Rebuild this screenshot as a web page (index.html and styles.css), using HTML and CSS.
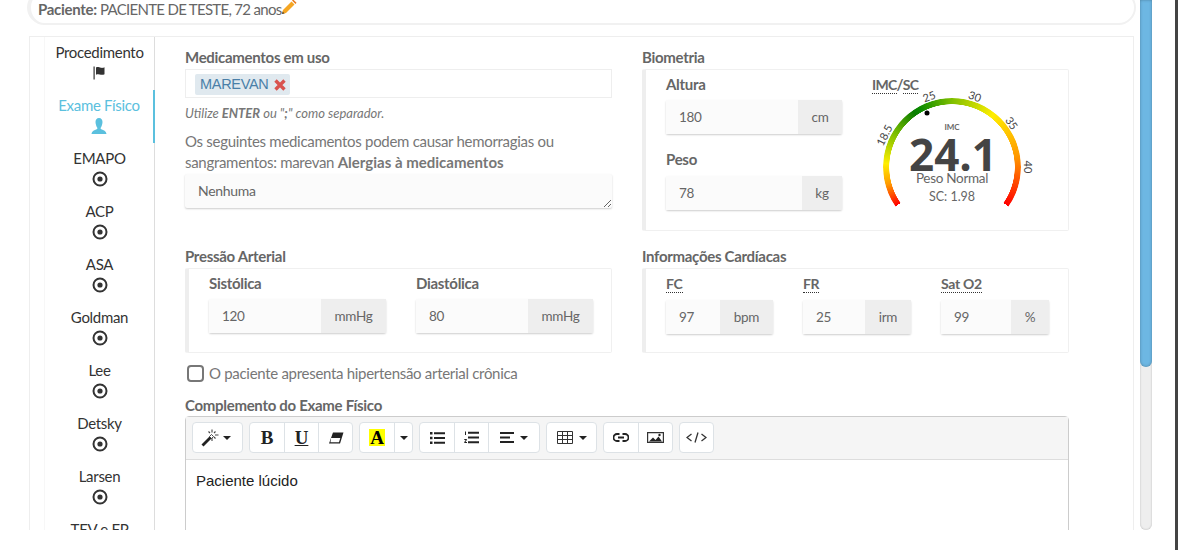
FILE: index.html
```html
<!DOCTYPE html>
<html lang="pt-br">
<head>
    <meta charset="UTF-8">
    <meta name="viewport" content="width=device-width, initial-scale=1.0">
    <title>Exame Físico</title>
    <link rel="stylesheet" href="styles.css">
</head>
<body>
    <div class="page">
        <div class="content">
            <div class="patient-bar">
                <b>Paciente:</b> PACIENTE DE TESTE, 72 anos<svg class="icon-pencil" width="16" height="16" viewBox="0 0 16 16"><path d="M1 15l1-4 8.500-8.500 3 3L5 14z" fill="#f5a623"/><path d="M11 1.500l1.200-1 3.300 3.300-1 1.200z" fill="#e8791c"/><path d="M1 15l.6-2.600 2 2z" fill="#5a4630"/></svg>
            </div>

            <div class="tabs">
                <ul class="nav">
                    <li>Procedimento
                        <svg class="nav-icon" width="16" height="16" viewBox="0 0 16 16"><path d="M1.500 1.500h1.200v13H1.500z" fill="#333"/><path d="M4 2.500c2-1 3 0 5 .3s2.500-.3 3.500-.6v7c-1 .5-2 .8-3.500.5s-3-1-5 0z" fill="#333"/></svg>
                    </li>
                    <li class="active">Exame Físico
                        <svg class="nav-icon" width="16" height="16" viewBox="0 0 16 16"><path d="M8 0c2.300 0 3.500 1.700 3.500 4S10.300 9 9.700 9.800c-.3.800 0 1.200 1 1.600 2 .7 4.300 1.300 4.800 4.600H.5c.5-3.300 2.800-3.900 4.800-4.600 1-.4 1.300-.8 1-1.600C5.700 9 4.500 6.300 4.500 4S5.700 0 8 0z" fill="currentColor"/></svg>
                    </li>
                    <li>EMAPO <svg class="nav-icon" width="16" height="16" viewBox="0 0 16 16"><circle cx="8" cy="8" r="6.500" fill="none" stroke="#333" stroke-width="2"/><circle cx="8" cy="8" r="2.600" fill="#333"/></svg></li>
                    <li>ACP <svg class="nav-icon" width="16" height="16" viewBox="0 0 16 16"><circle cx="8" cy="8" r="6.500" fill="none" stroke="#333" stroke-width="2"/><circle cx="8" cy="8" r="2.600" fill="#333"/></svg></li>
                    <li>ASA <svg class="nav-icon" width="16" height="16" viewBox="0 0 16 16"><circle cx="8" cy="8" r="6.500" fill="none" stroke="#333" stroke-width="2"/><circle cx="8" cy="8" r="2.600" fill="#333"/></svg></li>
                    <li>Goldman <svg class="nav-icon" width="16" height="16" viewBox="0 0 16 16"><circle cx="8" cy="8" r="6.500" fill="none" stroke="#333" stroke-width="2"/><circle cx="8" cy="8" r="2.600" fill="#333"/></svg></li>
                    <li>Lee <svg class="nav-icon" width="16" height="16" viewBox="0 0 16 16"><circle cx="8" cy="8" r="6.500" fill="none" stroke="#333" stroke-width="2"/><circle cx="8" cy="8" r="2.600" fill="#333"/></svg></li>
                    <li>Detsky <svg class="nav-icon" width="16" height="16" viewBox="0 0 16 16"><circle cx="8" cy="8" r="6.500" fill="none" stroke="#333" stroke-width="2"/><circle cx="8" cy="8" r="2.600" fill="#333"/></svg></li>
                    <li>Larsen <svg class="nav-icon" width="16" height="16" viewBox="0 0 16 16"><circle cx="8" cy="8" r="6.500" fill="none" stroke="#333" stroke-width="2"/><circle cx="8" cy="8" r="2.600" fill="#333"/></svg></li>
                    <li>TEV e FP</li>
                </ul>

                <div class="panel">
                    <div class="columns">
                        <div class="col">
                            <label class="title">Medicamentos em uso</label>
                            <div class="tag-box">
                                <span class="tag">MAREVAN <svg width="12" height="12" viewBox="0 0 12 12"><path d="M1.500 1.500l9 9M10.500 1.500l-9 9" stroke="#d9534f" stroke-width="3.400"/></svg></span>
                            </div>
                            <p class="hint">Utilize <b>ENTER</b> ou "<b>;</b>" como separador.</p>
                            <p class="warning">Os seguintes medicamentos podem causar hemorragias ou sangramentos: marevan <b>Alergias à medicamentos</b></p>
                            <textarea class="notes">Nenhuma</textarea>
                        </div>

                        <div class="col">
                            <label class="title">Biometria</label>
                            <div class="box box-bio">
                                <div class="bio-fields">
                                    <div class="field field-altura">
                                        <label>Altura</label>
                                        <div class="input-group"><input type="text" value="180"><span>cm</span></div>
                                    </div>
                                    <div class="field field-peso">
                                        <label>Peso</label>
                                        <div class="input-group"><input type="text" value="78"><span class="addon-kg">kg</span></div>
                                    </div>
                                </div>
                                <div class="imc">
                                    <label><abbr>IMC</abbr>/<abbr>SC</abbr></label>
                                    <div class="gauge">
                                        <div class="gauge-arc"></div>
                                        <svg class="gauge-text" width="168" height="120" viewBox="0 0 168 120">
                                            <text class="tick" x="12" y="38" transform="rotate(-63 12 38)">18.5</text>
                                            <text class="tick" x="57" y="-1" transform="rotate(-20 57 -1)">25</text>
                                            <text class="tick" x="103" y="-1" transform="rotate(20 103 -1)">30</text>
                                            <text class="tick" x="140" y="26" transform="rotate(55 140 26)">35</text>
                                            <text class="tick" x="156" y="70" transform="rotate(90 156 70)">40</text>
                                            <circle cx="55" cy="16" r="2.500" fill="#000"/>
                                            <text class="g-small" x="80" y="30">IMC</text>
                                            <text class="g-value" x="81" y="57">24.1</text>
                                            <text class="g-label" x="80" y="81">Peso Normal</text>
                                            <text class="g-sc" x="80" y="99">SC: 1.98</text>
                                        </svg>
                                    </div>
                                </div>
                            </div>
                        </div>

                        <div class="col">
                            <label class="title">Pressão Arterial</label>
                            <div class="box box-row box-pressure">
                                <div class="field">
                                    <label>Sistólica</label>
                                    <div class="input-group"><input type="text" value="120"><span>mmHg</span></div>
                                </div>
                                <div class="field">
                                    <label>Diastólica</label>
                                    <div class="input-group"><input type="text" value="80"><span>mmHg</span></div>
                                </div>
                            </div>
                        </div>

                        <div class="col">
                            <label class="title">Informações Cardíacas</label>
                            <div class="box box-row box-cardiac">
                                <div class="field fc">
                                    <label><abbr>FC</abbr></label>
                                    <div class="input-group"><input type="text" value="97"><span>bpm</span></div>
                                </div>
                                <div class="field fr">
                                    <label><abbr>FR</abbr></label>
                                    <div class="input-group"><input type="text" value="25"><span>irm</span></div>
                                </div>
                                <div class="field sat">
                                    <label><abbr>Sat O2</abbr></label>
                                    <div class="input-group"><input type="text" value="99"><span>%</span></div>
                                </div>
                            </div>
                        </div>
                    </div>

                    <label class="check-row"><input type="checkbox"> O paciente apresenta hipertensão arterial crônica</label>

                    <label class="title">Complemento do Exame Físico</label>
                    <div class="editor">
                        <div class="toolbar">
                            <div class="btn-group">
                                <button class="w49 tight"><svg width="18" height="18" viewBox="0 0 18 18"><path d="M.5 15.500l8-8 2 2-8 8z" fill="#222"/><path d="M8.500 7.500l2-2 2 2-2 2z" fill="#fff" stroke="#222" stroke-width=".8"/><path d="M11 .5v3M11 9v3M14 6h3.500M14.500 2.500l-1.500 1.500M14.500 9.500l-1.500-1.500M7.500 2.500L9 4" stroke="#444" stroke-width="1.100"/></svg><i class="caret"></i></button>
                            </div>
                            <div class="btn-group">
                                <button class="w34 serif"><b>B</b></button>
                                <button class="w34 serif"><b class="under">U</b></button>
                                <button class="w34"><svg width="16" height="12" viewBox="0 0 16 12"><path d="M5 .5h10.500L12 11.500H1z" fill="#222"/><path d="M3 6h9.300l-1.300 4.300H2.500z" fill="#fff"/></svg></button>
                            </div>
                            <div class="btn-group">
                                <button class="w34 serif"><b class="hilite">A</b></button>
                                <button class="w18"><i class="caret"></i></button>
                            </div>
                            <div class="btn-group">
                                <button class="w34"><svg width="15" height="12" viewBox="0 0 15 12"><path d="M0 0h2.500v2.500H0zM4 .3h11v2H4zM0 4.700h2.500v2.500H0zM4 5h11v2H4zM0 9.500h2.500V12H0zM4 9.700h11v2H4z" fill="#222"/></svg></button>
                                <button class="w34"><svg width="15" height="13" viewBox="0 0 15 13"><path d="M4 .8h11v2H4zM4 5.500h11v2H4zM4 10.200h11v2H4z" fill="#222"/><path d="M1 .5h1v3.500H1zM.3 8h2.500v1L1.500 11h1.500v1H.3v-1l1.400-2H.3z" fill="#222"/></svg></button>
                                <button class="w51"><svg width="14" height="11" viewBox="0 0 14 11"><path d="M0 0h14v2H0zM0 4.500h10v2H0zM0 9h14v2H0z" fill="#222"/></svg><i class="caret"></i></button>
                            </div>
                            <div class="btn-group">
                                <button class="w49"><svg width="16" height="13" viewBox="0 0 16 13"><path d="M.5.500h15v12H.5zM.5 4.500h15M.5 8.500h15M5.500.500v12M10.500.500v12" fill="none" stroke="#333" stroke-width="1"/></svg><i class="caret"></i></button>
                            </div>
                            <div class="btn-group">
                                <button class="w34"><svg width="16" height="9" viewBox="0 0 16 9"><path d="M6.500 1H4a3.500 3.500 0 000 7h2.500M9.500 1H12a3.500 3.500 0 010 7H9.500M5 4.500h6" fill="none" stroke="#222" stroke-width="1.800"/></svg></button>
                                <button class="w34"><svg width="17" height="11" viewBox="0 0 17 11"><path d="M.6.600h15.800v9.800H.6z" fill="none" stroke="#333" stroke-width="1.200"/><path d="M2 9.500l4-4 2.500 2.500 3-3.500 3.500 5z" fill="#222"/><circle cx="12.500" cy="3" r="1.200" fill="#222"/></svg></button>
                            </div>
                            <div class="btn-group">
                                <button class="w33"><svg width="21" height="11" viewBox="0 0 21 11"><path d="M5.500 2L1 5.500 5.500 9M15.500 2L20 5.500 15.500 9M12 .5L9 10.500" fill="none" stroke="#333" stroke-width="1.300"/></svg></button>
                            </div>
                        </div>
                        <div class="editor-body">Paciente lúcido</div>
                    </div>
                </div>
            </div>
        </div>

        <div class="scrollbar"><div class="thumb"></div></div>
    </div>
    <div class="edge"></div>
</body>
</html>
```

FILE: styles.css
```css
body {
    margin: 0;
    display: flex;
    height: 550px;
    overflow: hidden;
    background-color: #fff;
    font-family: Lato, "Open Sans", sans-serif;
    font-size: 15px;
    line-height: 21px;
    letter-spacing: -0.3px;
    color: #777;
}

.page {
    display: flex;
    width: 1175px;
    height: 530px;
    overflow: hidden;
}

.edge {
    width: 3px;
    height: 550px;
    background-color: #444;
}

.content {
    width: 1109px;
    margin-left: 27px;
}

.patient-bar {
    display: flex;
    align-items: center;
    height: 35px;
    margin-top: -10px;
    padding: 3px 7px 0;
    box-sizing: border-box;
    border: 2px solid #f1f1f1;
    border-left-width: 4px;
    border-radius: 20px;
    color: #666;
    white-space: pre;
    letter-spacing: -0.7px;
}

.patient-bar b {
    letter-spacing: -0.3px;
}

.icon-pencil {
    margin-top: -5px;
}

.tabs {
    display: flex;
    width: 1105px;
    height: 600px;
    margin: 11px 0 0 2px;
    box-sizing: border-box;
    border: 1px solid #eee;
}

.nav {
    width: 109px;
    margin: 0 0 0 14px;
    padding: 0;
    list-style: none;
    border-left: 1px solid #f7f7f7;
    border-right: 1px solid #ddd;
    color: #333;
    text-align: center;
    flex-shrink: 0;
}

.nav li {
    height: 53px;
    box-sizing: border-box;
    padding-top: 5px;
}

.nav li.active {
    color: #5bc0de;
    border-right: 2px solid #5bc0de;
    margin-right: -1px;
}

.nav-icon {
    display: block;
    margin: 2px auto 0;
}

.panel {
    padding: 11px 0 0 30px;
    width: 884px;
}

.columns {
    display: grid;
    grid-template-columns: 427px 427px;
    column-gap: 30px;
    row-gap: 16px;
}

.title {
    display: block;
    padding-bottom: 2px;
    font-weight: bold;
    line-height: 19px;
    color: #666;
}

.tag-box {
    height: 29px;
    box-sizing: border-box;
    border: 1px solid #eee;
    padding: 3px 9px;
}

.tag {
    display: inline-flex;
    align-items: center;
    gap: 5px;
    height: 21px;
    padding: 0 4px 0 5px;
    border-radius: 2px;
    background-color: #e0e9ef;
    color: #4a7fa8;
    font-family: "Liberation Sans", sans-serif;
    font-size: 14.5px;
}

.hint {
    margin: 6px 0 0;
    font-size: 13px;
    line-height: 18px;
    font-style: italic;
    letter-spacing: 0;
}

.warning {
    margin: 9px 0 1px;
}

.warning b {
    letter-spacing: 0;
}

.notes {
    display: block;
    width: 100%;
    height: 34px;
    box-sizing: border-box;
    padding: 7px 13px;
    border: 0;
    border-radius: 2px;
    background-color: #fbfbfb;
    box-shadow: 0 1px 2px rgba(0, 0, 0, 0.2);
    font-family: inherit;
    font-size: 14px;
    line-height: 20px;
    letter-spacing: -0.3px;
    color: #666;
}

.box {
    box-sizing: border-box;
    border: 1px solid #f0f0f0;
    border-left: 4px solid #eee;
    border-radius: 2px;
}

.box-bio {
    display: flex;
    gap: 30px;
    height: 162px;
    padding: 4px 0 0 20px;
}

.bio-fields {
    width: 176px;
}

.box-row {
    display: flex;
    height: 85px;
    padding: 4px 0 0 20px;
}

.box-pressure .field {
    width: 177px;
    margin-right: 30px;
}

.field label {
    display: block;
    margin-bottom: 5px;
    font-weight: bold;
    color: #666;
}

.field-peso {
    margin-top: 15px;
}

.field-peso label {
    margin-bottom: 6px;
}

.input-group {
    display: flex;
    height: 34px;
    border-radius: 2px;
    box-shadow: 0 1px 2px rgba(0, 0, 0, 0.2);
}

.input-group input {
    flex: 1;
    min-width: 0;
    padding: 0 13px;
    border: 0;
    background-color: #fbfbfb;
    font-family: inherit;
    font-size: 13.5px;
    letter-spacing: -0.3px;
    color: #666;
}

.input-group span {
    display: flex;
    align-items: center;
    justify-content: center;
    width: 44px;
    background-color: #eee;
    font-size: 13.5px;
    color: #666;
}

.input-group .addon-kg {
    width: 40px;
}

.box-pressure .input-group span {
    width: 65px;
}

.box-cardiac .field label {
    margin-bottom: 6px;
    line-height: 20px;
}

abbr {
    border-bottom: 1px dotted #333;
    font-size: 14px;
}

.fc {
    width: 107px;
    margin-right: 30px;
}

.fc .input-group span {
    width: 53px;
}

.fr {
    width: 108px;
    margin-right: 30px;
}

.fr .input-group span {
    width: 46px;
}

.sat {
    width: 108px;
}

.sat .input-group span {
    width: 38px;
}

.imc label {
    display: block;
    font-weight: bold;
    color: #666;
    line-height: 20px;
    letter-spacing: -0.7px;
}

.gauge {
    position: relative;
    width: 168px;
    height: 120px;
    margin-top: 2px;
    letter-spacing: 0;
}

.gauge-arc {
    position: absolute;
    left: 11px;
    top: 1px;
    width: 138px;
    height: 138px;
    border-radius: 50%;
    background: conic-gradient(from -125deg, #f00 0deg, #ff9a00 20deg, #ffee00 38deg, #7dbf00 65deg, #0a7d00 90deg, #0a8a00 96deg, #7fbf00 125deg, #ffee00 163deg, #ff9a00 205deg, #f00 250deg, transparent 250deg);
    -webkit-mask: radial-gradient(closest-side, transparent 62.5px, #000 63px);
    mask: radial-gradient(closest-side, transparent 62.5px, #000 63px);
}

.gauge-text {
    position: absolute;
    left: 0;
    top: 0;
    overflow: visible;
}

.gauge-text text {
    text-anchor: middle;
    dominant-baseline: central;
    fill: #666;
}

.gauge-text .tick {
    font-size: 11px;
    fill: #444;
}

.gauge-text .g-small {
    font-size: 8px;
    font-weight: bold;
}

.gauge-text .g-value {
    font-family: "Open Sans", sans-serif;
    font-size: 44px;
    font-weight: bold;
    fill: #444;
}

.gauge-text .g-label {
    font-size: 13.5px;
    letter-spacing: -0.3px;
}

.gauge-text .g-sc {
    font-size: 12.5px;
}

.check-row {
    display: flex;
    align-items: center;
    gap: 5px;
    margin: 11px 0 14px 2px;
    height: 18px;
}

.check-row input {
    appearance: none;
    width: 17px;
    height: 17px;
    margin: 0;
    border: 2px solid #777;
    border-radius: 4px;
    background-color: #fff;
}

.editor {
    height: 200px;
    margin-top: -1px;
    border: 1px solid #ccc;
    border-radius: 4px;
}

.toolbar {
    display: flex;
    gap: 6px;
    height: 43px;
    box-sizing: border-box;
    padding: 5px 0 0 6px;
    background-color: #f5f5f5;
    border-bottom: 1px solid #ddd;
}

.btn-group {
    display: flex;
    height: 31px;
    box-sizing: border-box;
    border: 1px solid #dde2e6;
    border-radius: 4px;
    background-color: #fff;
}

.btn-group button {
    display: flex;
    align-items: center;
    justify-content: center;
    gap: 6px;
    height: 100%;
    padding: 0;
    border: 0;
    background: none;
    border-left: 1px solid #dde2e6;
    color: #222;
}

.btn-group button:first-child {
    border-left: 0;
}

.btn-group button.tight {
    gap: 4px;
    padding-right: 3px;
}

.w18 { width: 18px; }
.w33 { width: 33px; }
.w34 { width: 34px; }
.w49 { width: 49px; }
.w51 { width: 51px; }

.serif {
    font-family: "Liberation Serif", serif;
    font-size: 19px;
    letter-spacing: 0;
}

.under {
    text-decoration: underline;
    text-decoration-thickness: 1px;
    text-underline-offset: 1px;
}

.hilite {
    background-color: #ff0;
    color: #000;
    padding: 0 1px;
    line-height: 17px;
}

.caret {
    width: 0;
    height: 0;
    border-left: 4px solid transparent;
    border-right: 4px solid transparent;
    border-top: 4px solid #222;
}

.editor-body {
    padding: 10px;
    font-family: "Liberation Sans", sans-serif;
    font-size: 15px;
    letter-spacing: 0;
    color: #222;
}

.scrollbar {
    width: 12px;
    height: 530px;
    margin-left: 4px;
    border-radius: 0 0 6px 6px;
    background-color: #eee;
    box-shadow: inset 0 0 2px rgba(0, 0, 0, 0.25);
}

.thumb {
    height: 367px;
    border-radius: 0 0 6px 6px;
    background-color: #6db7e3;
    box-shadow: inset 0 0 3px rgba(0, 0, 0, 0.3);
}
```
